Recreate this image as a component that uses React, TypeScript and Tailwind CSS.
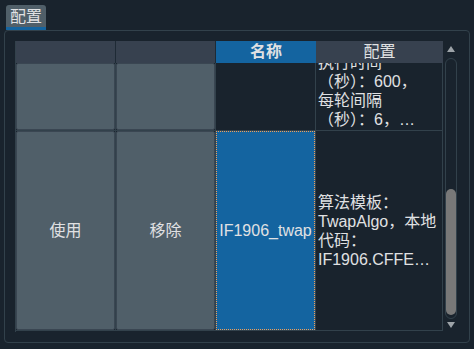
import React from 'react';

const font = { fontFamily: '"Liberation Sans", "Noto Sans CJK SC", sans-serif' };

const ButtonCell = ({ label }: { label?: string }) => (
  <div className="w-[100px] h-full border-r border-b border-[#32414b]">
    <div className="w-full h-full bg-[#505f69] border border-[#3a4652] rounded-[2px] flex items-center justify-center text-[16px] text-[#e0e1e3]">
      {label}
    </div>
  </div>
);

const ScrollArrow = ({ up }: { up?: boolean }) => (
  <svg width="12" height="8" viewBox="0 0 12 8" className="block">
    {up ? <polygon points="2,7 10,7 6,1" fill="#9da3a8" /> : <polygon points="2,1 10,1 6,7" fill="#9da3a8" />}
  </svg>
);

const App = () => {
  return (
    <div className="w-[474px] h-[349px] bg-[#19232d] overflow-hidden text-[#e0e1e3]" style={font}>
      {/* tab */}
      <div className="pt-[5px] pl-[6px]">
        <div className="w-[40px] h-[25px] bg-[#505f69] rounded-t-[3px] flex flex-col">
          <div className="flex-1 flex items-center justify-center text-[16px] leading-none pt-[1px]">配置</div>
          <div className="h-[3px] bg-[#1464a0]" />
        </div>
      </div>

      {/* frame */}
      <div className="ml-[4px] w-[466px] h-[313px] border border-[#32414b] rounded-[4px] pl-[10px] pt-[10px] flex gap-[2px]">
        {/* table */}
        <div className="w-[428px] h-[291px] flex flex-col border-l border-[#32414b]">
          {/* header */}
          <div className="flex h-[22px] text-[16px] leading-none">
            <div className="w-[100px] bg-[#37414f] border-r border-[#1e2a35]" />
            <div className="w-[100px] bg-[#37414f] border-r border-[#1e2a35]" />
            <div className="w-[100px] bg-[#1464a0] font-bold flex items-center justify-center">名称</div>
            <div className="flex-1 bg-[#37414f] flex items-center justify-center">配置</div>
          </div>

          {/* row 1, scrolled partly out of view */}
          <div className="flex h-[68px]">
            <ButtonCell />
            <ButtonCell />
            <div className="w-[100px] h-full border-r border-b border-[#32414b]" />
            <div className="flex-1 h-full border-r border-b border-[#32414b] overflow-hidden flex flex-col justify-end pl-[2px] pb-[1px] text-[16px] leading-[19px] whitespace-nowrap">
              <div>执行时间</div>
              <div>（秒）：600，</div>
              <div>每轮间隔</div>
              <div>（秒）：6，…</div>
            </div>
          </div>

          {/* row 2 */}
          <div className="flex h-[200px]">
            <ButtonCell label="使用" />
            <ButtonCell label="移除" />
            <div className="w-[100px] h-full border-r border-b border-[#32414b]">
              <div className="w-full h-full bg-[#1464a0] border border-dotted border-[#f0a05a] flex items-center justify-center text-[16px] whitespace-nowrap">
                IF1906_twap
              </div>
            </div>
            <div className="flex-1 h-full border-r border-b border-[#32414b] flex flex-col justify-center pl-[2px] text-[16px] leading-[19px] whitespace-nowrap">
              <div>算法模板：</div>
              <div>TwapAlgo，本地</div>
              <div>代码：</div>
              <div>IF1906.CFFE…</div>
            </div>
          </div>
        </div>

        {/* scrollbar */}
        <div className="w-[12px] flex flex-col items-center pt-[4px]">
          <ScrollArrow up />
          <div className="mt-[5px] w-[12px] h-[261px] border border-[#32414b] rounded-[6px] flex flex-col justify-end pb-[3px] items-center">
            <div className="w-[10px] h-[126px] bg-[#787878] rounded-[5px]" />
          </div>
          <div className="mt-[2px]">
            <ScrollArrow />
          </div>
        </div>
      </div>
    </div>
  );
};

export default App;
